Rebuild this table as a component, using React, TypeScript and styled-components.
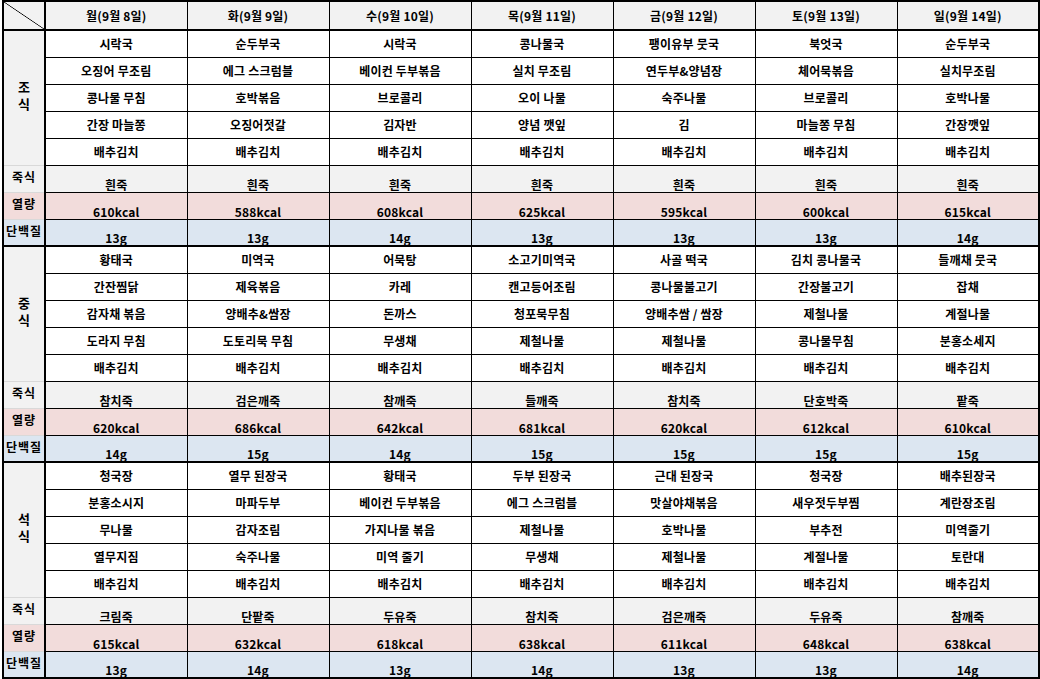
import styled, { createGlobalStyle } from 'styled-components'

const GlobalStyle = createGlobalStyle`
  html, body {
    margin: 0;
    padding: 0;
    background: #ffffff;
  }
  body {
    font-family: "Noto Sans CJK KR", "Noto Sans", sans-serif;
    color: #000;
  }
`

type Tone = 'plain' | 'gray' | 'pink' | 'blue'

const toneColor: Record<Tone, string> = {
  plain: '#ffffff',
  gray: '#f2f2f2',
  pink: '#f2dcdb',
  blue: '#dce6f1',
}

const Page = styled.div`
  padding: 0 0 0 2px;
`

const Sheet = styled.table`
  border-collapse: collapse;
  table-layout: fixed;
  width: 1036px;
  border: 2px solid #000;
  font-size: 12px;
  font-weight: 700;
  letter-spacing: 0.2px;
`

const Row = styled.tr<{ $h: number }>`
  height: ${(p) => p.$h}px;
`

const Corner = styled.th`
  border: 2px solid #000;
  background: #f2f2f2 linear-gradient(
    to top right,
    transparent calc(50% - 0.7px),
    #000 50%,
    transparent calc(50% + 0.7px)
  );
  padding: 0;
`

const DayHead = styled.th`
  border: 1px solid #000;
  border-bottom: 2px solid #000;
  background: #f2f2f2;
  font-weight: 700;
  padding: 0;
  text-align: center;
  vertical-align: middle;
`

const MealLabel = styled.th`
  border-top: 2px solid #000;
  border-right: 2px solid #000;
  border-bottom: 1px solid #d9d9d9;
  background: #f2f2f2;
  font-size: 13px;
  font-weight: 700;
  padding: 0 0 6px;
  text-align: center;
  vertical-align: middle;
`

const LabelChar = styled.span`
  display: block;
  line-height: 17px;
`

const SubLabel = styled.th<{ $tone: Tone }>`
  border-top: 1px solid #d9d9d9;
  border-right: 2px solid #000;
  background: ${(p) => toneColor[p.$tone]};
  font-size: 12px;
  font-weight: 700;
  letter-spacing: 1px;
  line-height: 15px;
  padding: 0 0 4px;
  text-align: center;
  vertical-align: middle;
  white-space: nowrap;
`

const Cell = styled.td<{ $tone: Tone; $top?: boolean }>`
  border: 1px solid #000;
  border-top: ${(p) => (p.$top ? '2px' : '1px')} solid #000;
  background: ${(p) => toneColor[p.$tone]};
  padding: 0;
  text-align: center;
  vertical-align: ${(p) => (p.$tone === 'plain' ? 'middle' : 'bottom')};
  line-height: ${(p) => (p.$tone === 'plain' ? '16px' : '15px')};
  white-space: nowrap;
`

const days = ['월(9월 8일)', '화(9월 9일)', '수(9월 10일)', '목(9월 11일)', '금(9월 12일)', '토(9월 13일)', '일(9월 14일)']

type Meal = {
  label: string
  items: string[][]
  porridge: string[]
  kcal: string[]
  protein: string[]
}

const kimchi = Array(7).fill('배추김치')

const meals: Meal[] = [
  {
    label: '조식',
    items: [
      ['시락국', '순두부국', '시락국', '콩나물국', '팽이유부 뭇국', '북엇국', '순두부국'],
      ['오징어 무조림', '에그 스크럼블', '베이컨 두부볶음', '실치 무조림', '연두부&양념장', '체어묵볶음', '실치무조림'],
      ['콩나물 무침', '호박볶음', '브로콜리', '오이 나물', '숙주나물', '브로콜리', '호박나물'],
      ['간장 마늘쫑', '오징어젓갈', '김자반', '양념 깻잎', '김', '마늘쫑 무침', '간장깻잎'],
      kimchi,
    ],
    porridge: Array(7).fill('흰죽'),
    kcal: ['610kcal', '588kcal', '608kcal', '625kcal', '595kcal', '600kcal', '615kcal'],
    protein: ['13g', '13g', '14g', '13g', '13g', '13g', '14g'],
  },
  {
    label: '중식',
    items: [
      ['황태국', '미역국', '어묵탕', '소고기미역국', '사골 떡국', '김치 콩나물국', '들깨채 뭇국'],
      ['간잔찜닭', '제육볶음', '카레', '캔고등어조림', '콩나물불고기', '간장불고기', '잡채'],
      ['감자채 볶음', '양배추&쌈장', '돈까스', '청포묵무침', '양배추쌈 / 쌈장', '제철나물', '계절나물'],
      ['도라지 무침', '도토리묵 무침', '무생채', '제철나물', '제철나물', '콩나물무침', '분홍소세지'],
      kimchi,
    ],
    porridge: ['참치죽', '검은깨죽', '참깨죽', '들깨죽', '참치죽', '단호박죽', '팥죽'],
    kcal: ['620kcal', '686kcal', '642kcal', '681kcal', '620kcal', '612kcal', '610kcal'],
    protein: ['14g', '15g', '14g', '15g', '15g', '15g', '15g'],
  },
  {
    label: '석식',
    items: [
      ['청국장', '열무 된장국', '황태국', '두부 된장국', '근대 된장국', '청국장', '배추된장국'],
      ['분홍소시지', '마파두부', '베이컨 두부볶음', '에그 스크럼블', '맛살야채볶음', '새우젓두부찜', '계란장조림'],
      ['무나물', '감자조림', '가지나물 볶음', '제철나물', '호박나물', '부추전', '미역줄기'],
      ['열무지짐', '숙주나물', '미역 줄기', '무생채', '제철나물', '계절나물', '토란대'],
      kimchi,
    ],
    porridge: ['크림죽', '단팥죽', '두유죽', '참치죽', '검은깨죽', '두유죽', '참깨죽'],
    kcal: ['615kcal', '632kcal', '618kcal', '638kcal', '611kcal', '648kcal', '638kcal'],
    protein: ['13g', '14g', '13g', '14g', '13g', '13g', '14g'],
  },
]

function MealBlock({ meal }: { meal: Meal }) {
  const extra: { label: string; tone: Tone; values: string[] }[] = [
    { label: '죽식', tone: 'gray', values: meal.porridge },
    { label: '열량', tone: 'pink', values: meal.kcal },
    { label: '단백질', tone: 'blue', values: meal.protein },
  ]

  return (
    <>
      {meal.items.map((row, i) => (
        <Row key={i} $h={27}>
          {i === 0 && (
            <MealLabel rowSpan={5}>
              {meal.label.split('').map((ch) => (
                <LabelChar key={ch}>{ch}</LabelChar>
              ))}
            </MealLabel>
          )}
          {row.map((item, d) => (
            <Cell key={d} $tone="plain" $top={i === 0}>
              {item}
            </Cell>
          ))}
        </Row>
      ))}
      {extra.map((r) => (
        <Row key={r.label} $h={27}>
          <SubLabel $tone={r.tone}>{r.label}</SubLabel>
          {r.values.map((v, d) => (
            <Cell key={d} $tone={r.tone}>
              {v}
            </Cell>
          ))}
        </Row>
      ))}
    </>
  )
}

function App() {
  return (
    <Page>
      <GlobalStyle />
      <Sheet>
        <colgroup>
          <col style={{ width: 42 }} />
          {days.map((d) => (
            <col key={d} style={{ width: 142 }} />
          ))}
        </colgroup>
        <thead>
          <Row $h={29}>
            <Corner />
            {days.map((d) => (
              <DayHead key={d}>{d}</DayHead>
            ))}
          </Row>
        </thead>
        <tbody>
          {meals.map((m) => (
            <MealBlock key={m.label} meal={m} />
          ))}
        </tbody>
      </Sheet>
    </Page>
  )
}

export default App
